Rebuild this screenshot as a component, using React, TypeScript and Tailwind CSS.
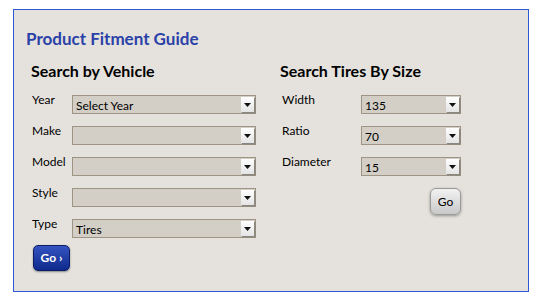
import React from "react";

function Sel({ value, w }: { value: string; w: number }) {
  return (
    <div
      className="flex h-[19px] items-stretch border border-[#9d9484] bg-[#d3cfc7]"
      style={{ width: w }}
    >
      <div className="flex-1 pl-[3px] text-[12px] leading-[19px] text-black">{value}</div>
      <div className="my-[1px] mr-[1px] flex w-[13px] items-center justify-center bg-gradient-to-b from-white to-[#e4e4e4] shadow-[1px_1px_1px_rgba(0,0,0,0.35)]">
        <svg width="7" height="4" viewBox="0 0 7 4">
          <polygon points="0,0 7,0 3.5,4" fill="#111" />
        </svg>
      </div>
    </div>
  );
}

function Row({ label, value, lw, sw }: { label: string; value: string; lw: number; sw: number }) {
  return (
    <div className="flex h-[31px] items-start">
      <div className="text-[12px] leading-[14px] text-black mt-[-1px]" style={{ width: lw }}>
        {label}
      </div>
      <div className="mt-[1px]">
        <Sel value={value} w={sw} />
      </div>
    </div>
  );
}

export default function App() {
  return (
    <div className="h-[304px] w-[544px] bg-white pl-[13px] pt-[9px]" style={{ fontFamily: "Lato, 'Open Sans', sans-serif" }}>
      <div className="h-[283px] w-[516px] border border-[#2f58d6] bg-[#e5e2dd]">
        <div className="pl-[12px] pt-[18px] text-[17px] font-bold leading-[22px] text-[#2a41a8]">Product Fitment Guide</div>
        <div className="mt-[11px] flex pl-[17px]">
          <div className="w-[249px]">
            <div className="text-[16px] font-bold leading-[20px] text-black">Search by Vehicle</div>
            <div className="mt-[13px] pl-[1px]">
              <Row label="Year" value="Select Year" lw={40} sw={184} />
              <Row label="Make" value="" lw={40} sw={184} />
              <Row label="Model" value="" lw={40} sw={184} />
              <Row label="Style" value="" lw={40} sw={184} />
              <Row label="Type" value="Tires" lw={40} sw={184} />
            </div>
            <button className="mt-[-4px] ml-[2px] block h-[26px] w-[37px] rounded-[5px] border border-[#0b1d66] bg-gradient-to-b from-[#3553c2] to-[#0e2a8c] text-[12px] font-bold text-white shadow-[0_1px_2px_rgba(0,0,0,0.4)]">
              Go ›
            </button>
          </div>
          <div className="w-[200px]">
            <div className="text-[16px] font-bold leading-[20px] text-black">Search Tires By Size</div>
            <div className="mt-[13px] pl-[2px]">
              <Row label="Width" value="135" lw={79} sw={100} />
              <Row label="Ratio" value="70" lw={79} sw={100} />
              <Row label="Diameter" value="15" lw={79} sw={100} />
            </div>
            <div className="mt-[1px] flex pl-[150px]">
              <button className="h-[27px] w-[31px] rounded-[6px] border border-[#9a9a9a] bg-gradient-to-b from-[#f2f2f2] to-[#c9c9c9] text-[12px] text-black shadow-[0_1px_3px_rgba(0,0,0,0.35)]">
                Go
              </button>
            </div>
          </div>
        </div>
      </div>
    </div>
  );
}
